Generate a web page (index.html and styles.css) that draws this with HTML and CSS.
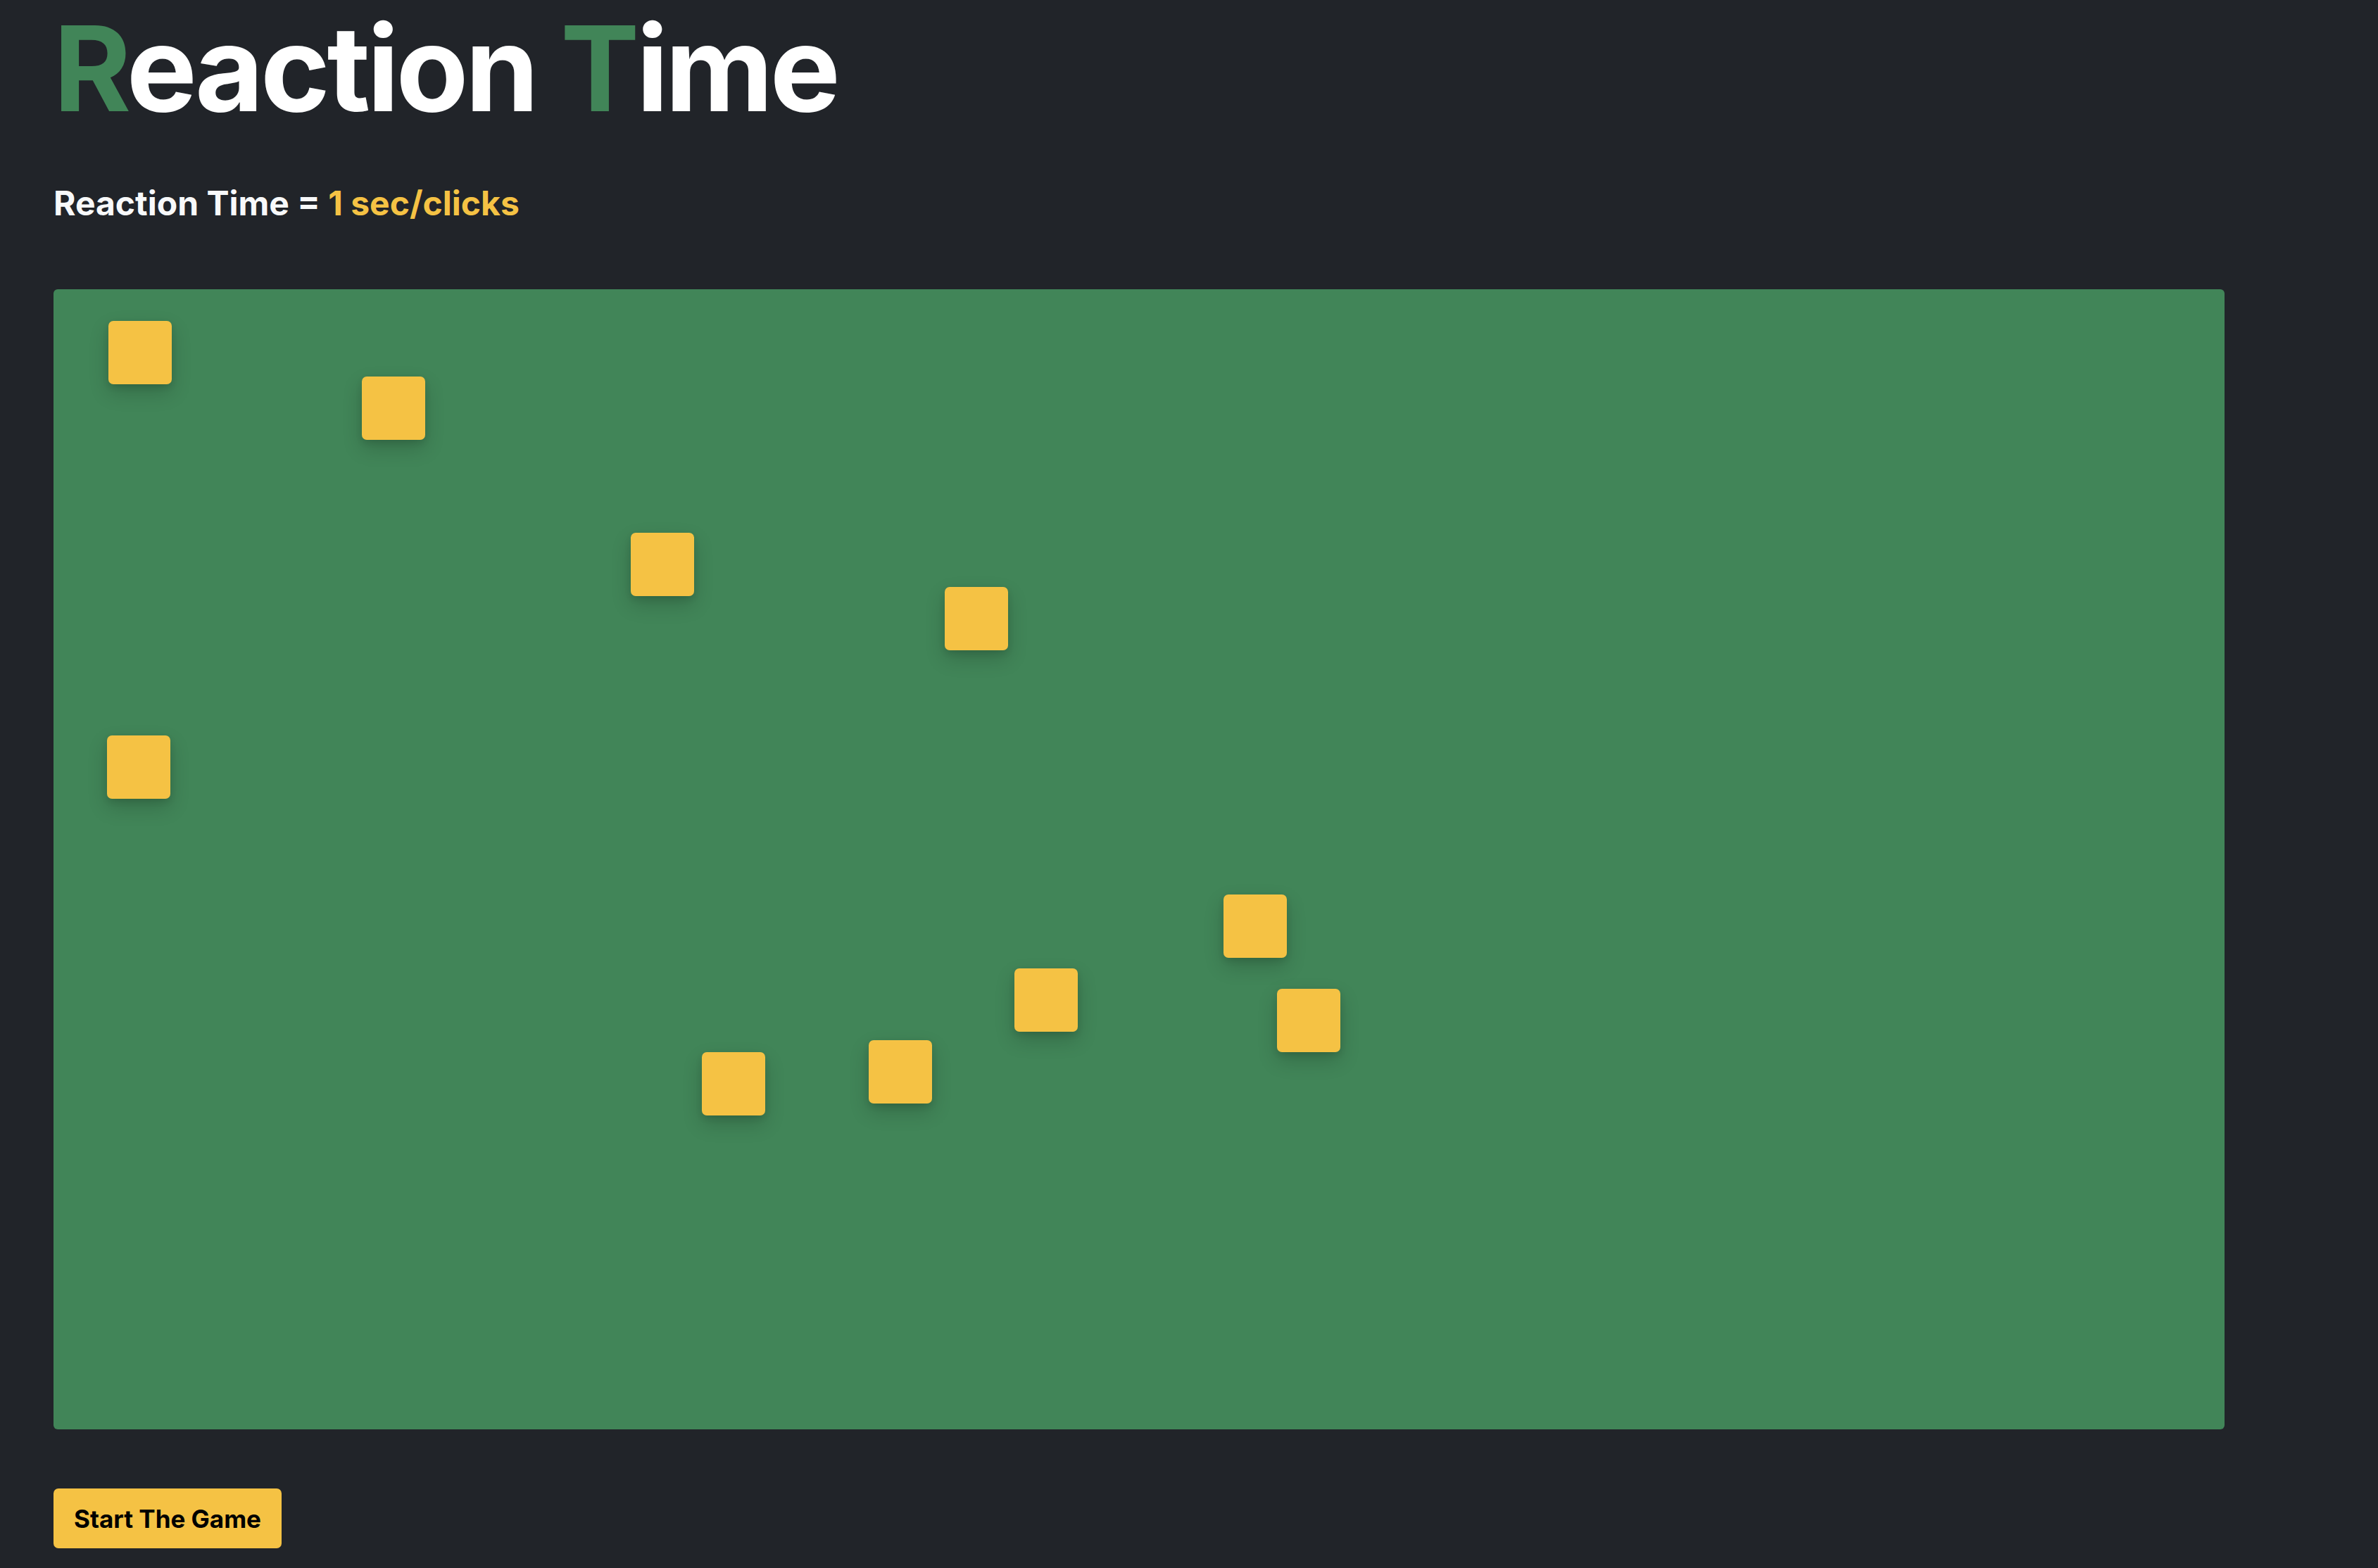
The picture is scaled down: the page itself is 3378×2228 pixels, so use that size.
FILE: index.html
```html
<!DOCTYPE html>
<html>
<head>
<meta charset="utf-8">
<title>Reaction Time</title>
<link rel="stylesheet" href="styles.css">
</head>
<body>
<main class="page">
  <h1 class="title"><span class="accent">R</span>eaction <span class="accent">T</span>ime</h1>
  <p class="score">Reaction Time = <span class="score-value">1 sec/clicks</span></p>
  <div class="board">
    <div class="box" style="left:78px;top:45px"></div>
    <div class="box" style="left:438px;top:124px"></div>
    <div class="box" style="left:820px;top:346px"></div>
    <div class="box" style="left:1266px;top:423px"></div>
    <div class="box" style="left:76px;top:634px"></div>
    <div class="box" style="left:1662px;top:860px"></div>
    <div class="box" style="left:1365px;top:965px"></div>
    <div class="box" style="left:1738px;top:994px"></div>
    <div class="box" style="left:921px;top:1084px"></div>
    <div class="box" style="left:1158px;top:1067px"></div>
  </div>
  <button class="start">Start The Game</button>
</main>
</body>
</html>
```
FILE: styles.css
```css
html, body {
  margin: 0;
  padding: 0;
  background: #212429;
}
body {
  font-family: Inter, "Noto Sans", "Liberation Sans", sans-serif;
  color: #f8f9fa;
}
.page {
  padding: 13px 76px 28px 76px;
  display: flex;
  flex-direction: column;
  align-items: flex-start;
}
.title {
  margin: 0;
  font-size: 168px;
  line-height: 1;
  font-weight: 700;
  letter-spacing: -4.5px;
  color: #ffffff;
}
.accent {
  color: #418558;
}
.score {
  margin: 84px 0 0 0;
  font-size: 48px;
  line-height: 1;
  font-weight: 700;
  letter-spacing: 0;
}
.score-value {
  color: #f5c244;
}
.board {
  position: relative;
  margin-top: 98px;
  width: 3084px;
  height: 1620px;
  background: #418558;
  border-radius: 6px;
}
.box {
  position: absolute;
  width: 90px;
  height: 90px;
  background: #f5c244;
  border-radius: 7px;
  box-shadow: 0 12px 28px rgba(0, 0, 0, 0.18), 0 4px 10px rgba(0, 0, 0, 0.1);
}
.start {
  margin-top: 84px;
  height: 85px;
  padding: 0 29px;
  border: none;
  border-radius: 7px;
  background: #f5c244;
  color: #000;
  font-family: Inter, "Noto Sans", "Liberation Sans", sans-serif;
  font-size: 35px;
  font-weight: 700;
  letter-spacing: 0;
}
```
